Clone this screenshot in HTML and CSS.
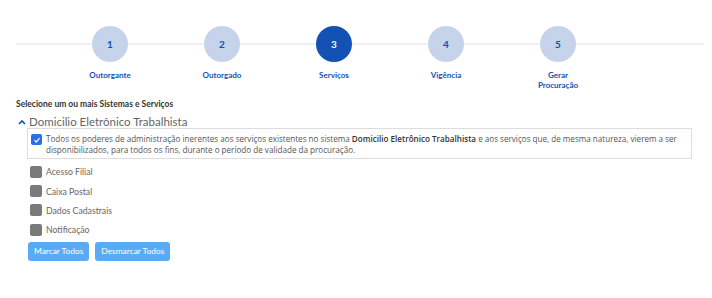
FILE: index.html
```html
<!DOCTYPE html>
<html lang="pt-BR">

<head>
    <meta charset="UTF-8">
    <title>Procuração</title>
    <link rel="stylesheet" href="styles.css">
</head>

<body>
    <div class="stepper">
        <div class="step">
            <div class="circle">1</div>
            <div class="label">Outorgante</div>
        </div>
        <div class="step">
            <div class="circle">2</div>
            <div class="label">Outorgado</div>
        </div>
        <div class="step active">
            <div class="circle">3</div>
            <div class="label">Serviços</div>
        </div>
        <div class="step">
            <div class="circle">4</div>
            <div class="label">Vigência</div>
        </div>
        <div class="step">
            <div class="circle">5</div>
            <div class="label">Gerar<br>Procuração</div>
        </div>
    </div>

    <div class="content">
        <div class="title">Selecione um ou mais Sistemas e Serviços</div>

        <div class="system">
            <svg class="chevron" width="8" height="6" viewBox="0 0 8 6">
                <path d="M1 5 L4 2 L7 5" fill="none" stroke="#1351b4" stroke-width="1.6" />
            </svg>
            Domicilio Eletrônico Trabalhista
        </div>

        <div class="all-box">
            <span class="check checked">
                <svg width="8" height="8" viewBox="0 0 8 8">
                    <path d="M1.5 4.2 L3.3 6 L6.6 2.2" fill="none" stroke="#fff" stroke-width="1.2" />
                </svg>
            </span>
            <p>Todos os poderes de administração inerentes aos serviços existentes no sistema <strong>Domicilio Eletrônico Trabalhista</strong> e aos serviços que, de mesma natureza, vierem a ser disponibilizados, para todos os fins, durante o período de validade da procuração.</p>
        </div>

        <ul class="services">
            <li><span class="check"></span>Acesso Filial</li>
            <li><span class="check"></span>Caixa Postal</li>
            <li><span class="check"></span>Dados Cadastrais</li>
            <li><span class="check"></span>Notificação</li>
        </ul>

        <div class="buttons">
            <button class="button">Marcar Todos</button>
            <button class="button">Desmarcar Todos</button>
        </div>
    </div>
</body>

</html>
```

FILE: styles.css
```css
body,
html {
    margin: 0;
    padding: 0;
    background: #fff;
    font-family: Lato, "Open Sans", sans-serif;
}

.stepper {
    position: relative;
    display: flex;
    margin: 26px 8px 0 16px;
    padding-left: 38px;
}

.stepper::before {
    content: "";
    position: absolute;
    left: 0;
    right: 0;
    top: 17px;
    height: 2px;
    background: #f0f0f0;
}

.step {
    position: relative;
    width: 112px;
    display: flex;
    flex-direction: column;
    align-items: center;
}

.circle {
    width: 36px;
    height: 36px;
    border-radius: 50%;
    background: #c5d4eb;
    color: #1351b4;
    font-size: 10px;
    font-weight: 700;
    display: flex;
    align-items: center;
    justify-content: center;
}

.step.active .circle {
    background: #1351b4;
    color: #fff;
}

.label {
    margin-top: 8px;
    color: #1351b4;
    font-size: 8px;
    font-weight: 700;
    text-align: center;
    line-height: 10px;
}

.content {
    padding: 0 20px 0 16px;
}

.title {
    margin-top: 9px;
    font-size: 8.5px;
    font-weight: 700;
    color: #333;
}

.system {
    display: flex;
    align-items: center;
    margin-top: 6px;
    padding-left: 2px;
    font-size: 11.5px;
    color: #666;
}

.chevron {
    margin-right: 3px;
}

.all-box {
    display: flex;
    align-items: flex-start;
    margin: 0 0 0 11px;
    padding: 4px 4px 3px 3px;
    border: 1px solid #ddd;
}

.all-box p {
    margin: 0;
    font-family: "Open Sans", sans-serif;
    font-size: 8.1px;
    line-height: 11px;
    color: #555;
}

.all-box strong {
    font-weight: 600;
    color: #333;
}

.check {
    flex: none;
    display: inline-flex;
    align-items: center;
    justify-content: center;
    width: 12px;
    height: 12px;
    border-radius: 2px;
    background: #7a7a7a;
    margin-right: 4px;
}

.check.checked {
    width: 11px;
    height: 11px;
    margin-top: 1px;
    background: #2670e8;
}

.services {
    list-style: none;
    margin: 3px 0 0 14px;
    padding: 0;
}

.services li {
    display: flex;
    align-items: center;
    height: 19.4px;
    font-size: 8.7px;
    color: #666;
}

.buttons {
    display: flex;
    gap: 6px;
    margin: 2px 0 0 12px;
}

.button {
    background-color: #5aabf6;
    color: #fff;
    border: none;
    border-radius: 3px;
    height: 19px;
    padding: 0 6px;
    font-family: inherit;
    font-size: 8.4px;
}
```
